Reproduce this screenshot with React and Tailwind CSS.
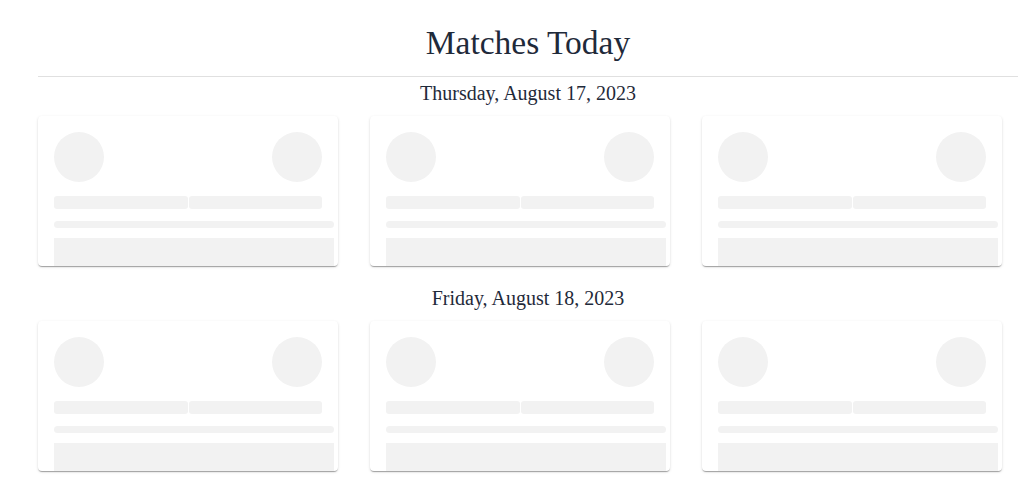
const days = ["Thursday, August 17, 2023", "Friday, August 18, 2023"];

function SkeletonCard() {
  return (
    <div className="w-[300px] h-[150px] overflow-hidden rounded-[4px] bg-white shadow-[0_2px_1px_-1px_rgba(0,0,0,0.2),0_1px_1px_0_rgba(0,0,0,0.14),0_1px_3px_0_rgba(0,0,0,0.12)] pt-4 pl-4 pr-1">
      <div className="w-[268px]">
        <div className="flex justify-between">
          <div className="w-[50px] h-[50px] rounded-full bg-[#f2f2f2]" />
          <div className="w-[50px] h-[50px] rounded-full bg-[#f2f2f2]" />
        </div>
        <div className="flex gap-[1px] mt-[14px]">
          <div className="flex-1 h-[13px] rounded-[3px] bg-[#f2f2f2]" />
          <div className="flex-1 h-[13px] rounded-[3px] bg-[#f2f2f2]" />
        </div>
      </div>
      <div className="mt-[12px] h-[7px] rounded-full bg-[#f2f2f2]" />
      <div className="mt-[10px] h-[40px] bg-[#f2f2f2]" />
    </div>
  );
}

export default function App() {
  return (
    <div
      className="min-h-screen bg-white text-[#1f2a3a]"
      style={{ fontFamily: '"Liberation Serif", "Times New Roman", serif' }}
    >
      <div className="ml-[38px] w-[980px]">
        {/* Header */}
        <div className="pt-[24px] pb-[14px] border-b border-[#e0e0e0] text-center">
          <h1 className="text-[33.5px] leading-[38px]">Matches Today</h1>
        </div>

        {days.map((day, i) => (
          <div key={day} className={i === 0 ? "mt-[5px]" : "mt-[21px]"}>
            <h2 className="text-center text-[20px] leading-[23px]">{day}</h2>
            <div className={`flex gap-8 ${i === 0 ? "mt-[11px]" : "mt-[11px]"}`}>
              <SkeletonCard />
              <SkeletonCard />
              <SkeletonCard />
            </div>
          </div>
        ))}
      </div>
    </div>
  );
}
